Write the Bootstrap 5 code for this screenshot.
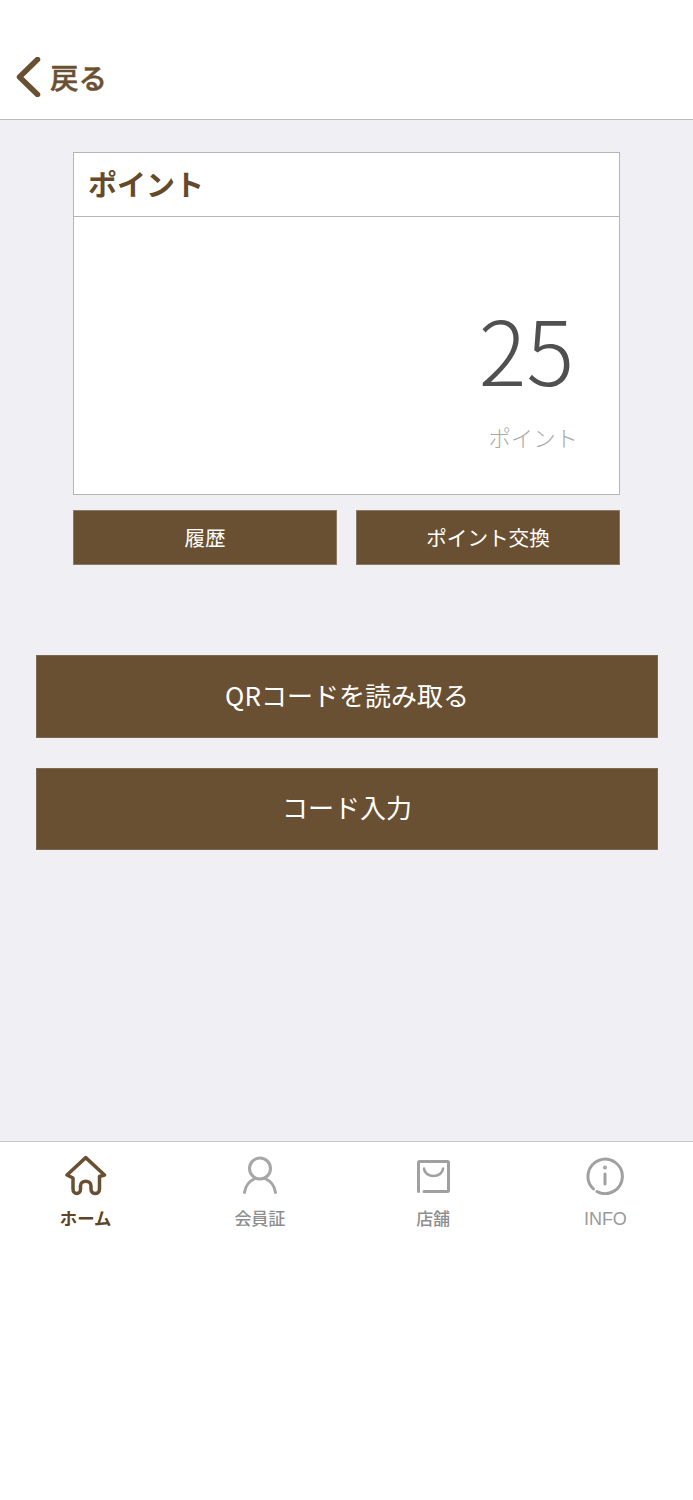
<!DOCTYPE html>
<html lang="ja">
<head>
<meta charset="utf-8">
<title>ポイント</title>
<link href="https://cdn.jsdelivr.net/npm/bootstrap@5.3.0/dist/css/bootstrap.min.css" rel="stylesheet">
<style>
html,body{margin:0;background:#fff;}
body{font-family:"Noto Sans CJK JP","Liberation Sans",sans-serif;color:#6a5032;}
.top-bar{height:120px;border-bottom:1px solid #b9b9bb;padding:0 0 22px 16px;}
.back-link{color:#6a5032;font-size:28.5px;font-weight:500;line-height:40px;text-decoration:none;gap:9px;-webkit-text-stroke:.5px #6a5032;}
.main-area{height:1022px;background:#efeff4;border-bottom:1px solid #c6c6ca;padding-top:32px;}
.point-panel{margin:0 73px;border:1px solid #b5b5b5;border-radius:0;background:#fff;height:343px;}
.panel-head{height:64px;border-bottom:1px solid #b5b5b5;padding-left:14px;font-size:29px;font-weight:700;color:#64492a;line-height:60px;}
.point-value{font-family:"Noto Sans CJK JP",sans-serif;font-weight:300;font-size:89px;line-height:96px;color:#505050;margin:83px 45px 0 0;text-align:right;}
.point-unit{font-size:22.4px;font-weight:300;line-height:32px;color:#aaa;margin:25px 41px 0 0;text-align:right;}
.pair-row{margin:15px 73px 0;gap:19px;}
.brown-btn{background:#6a5032;color:#fff;border:1px solid #8b7a66;border-radius:0;width:100%;padding:0;font-weight:400;}
.brown-btn:hover{background:#6a5032;color:#fff;}
.pair-row .brown-btn{height:55px;font-size:20.6px;padding-bottom:1px;}
.wide-stack{margin:90px 35px 0 36px;gap:30px;}
.wide-stack .brown-btn{height:82.5px;font-size:26px;padding-bottom:4px;border-color:#7d6952;}
.tab-bar{height:100px;}
.tab-item{width:25%;font-size:17px;font-weight:500;line-height:24px;color:#8e8e8e;}
.tab-item.active-tab{color:#5f4526;font-weight:700;font-size:17.4px;padding-right:2px;}
.tab-icon{height:52px;margin-top:8px;margin-bottom:4px;}
.latin-label{font-family:"Liberation Sans",sans-serif;font-size:18px;font-weight:400;color:#999;padding-top:1px;}
.nudge-info{padding-right:2px;}
</style>
</head>
<body>
<header class="top-bar d-flex align-items-end">
  <a href="#" class="back-link d-flex align-items-center">
    <svg width="25" height="40" viewBox="0 0 25 40" fill="none" stroke="#6a5032" stroke-width="5.5" stroke-linecap="round" stroke-linejoin="round"><path d="M21.5 2.5 3.5 20l18 17.5"/></svg>
    <span>戻る</span>
  </a>
</header>
<main class="main-area">
  <section class="card point-panel">
    <div class="panel-head">ポイント</div>
    <div class="point-value">25</div>
    <div class="point-unit">ポイント</div>
  </section>
  <div class="pair-row d-flex">
    <button class="btn brown-btn">履歴</button>
    <button class="btn brown-btn">ポイント交換</button>
  </div>
  <div class="wide-stack d-flex flex-column">
    <button class="btn brown-btn">QRコードを読み取る</button>
    <button class="btn brown-btn">コード入力</button>
  </div>
</main>
<nav class="tab-bar d-flex">
  <div class="tab-item active-tab text-center">
    <div class="tab-icon d-flex justify-content-center align-items-center">
      <svg width="42" height="40" viewBox="0 0 42 40" fill="none" stroke="#6a5032" stroke-width="3.500" stroke-linecap="round" stroke-linejoin="round"><path d="M2 19 20.7 1.6 39.500 19 34.500 20.500V33c0 6-8.500 6-8.500 0V30c0-6.500-10.500-6.500-10.500 0v3c0 6-7.500 6-7.500 0V22Z"/></svg>
    </div>
    <div>ホーム</div>
  </div>
  <div class="tab-item text-center">
    <div class="tab-icon d-flex justify-content-center align-items-center">
      <svg width="34" height="41" viewBox="0 0 34 41" fill="none" stroke="#a6a6a6" stroke-width="3" stroke-linecap="round"><circle cx="17" cy="12.500" r="10.500"/><path d="M1.500 36.500c1-7.500 6-12 10.500-14M32.500 36.500c-1-7.500-6-12-10.500-14"/></svg>
    </div>
    <div>会員証</div>
  </div>
  <div class="tab-item text-center">
    <div class="tab-icon d-flex justify-content-center align-items-center">
      <svg width="35" height="35" viewBox="0 0 35 35" fill="none" stroke="#a0a0a0" stroke-width="3" stroke-linecap="round" stroke-linejoin="round"><path d="M2.500 32.500V3.500a1 1 0 0 1 1-1h28a1 1 0 0 1 1 1v28a1 1 0 0 1-1 1H8"/><path d="M8 9.500c1 10 18 10 19 0" stroke-width="2.500"/></svg>
    </div>
    <div>店舗</div>
  </div>
  <div class="tab-item text-center nudge-info">
    <div class="tab-icon d-flex justify-content-center align-items-center">
      <svg width="38" height="38" viewBox="0 0 38 38" fill="none" stroke="#a0a0a0" stroke-width="3" stroke-linecap="round"><path d="M7.500 32A17.200 17.200 0 1 1 11 34.500"/><path d="M19 17v10"/><circle cx="19" cy="10.500" r=".8" stroke-width="2.400"/></svg>
    </div>
    <div class="latin-label">INFO</div>
  </div>
</nav>
</body>
</html>
